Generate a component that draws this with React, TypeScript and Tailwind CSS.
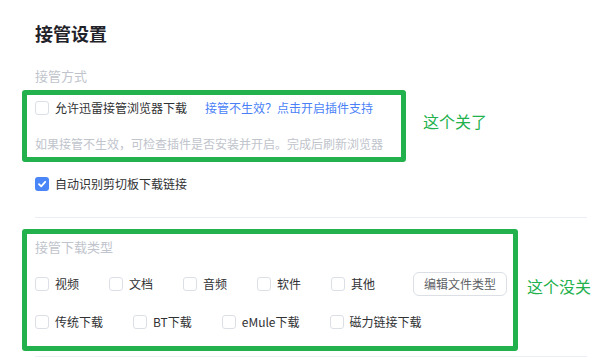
import React from "react";

const font = { fontFamily: '"Noto Sans CJK SC", "Noto Sans", sans-serif' };

function Box({ checked = false }: { checked?: boolean }) {
  if (checked) {
    return (
      <span className="flex h-[14px] w-[14px] shrink-0 items-center justify-center rounded-[3px] bg-[#4a86f7]">
        <svg width="10" height="10" viewBox="0 0 10 10">
          <path d="M2 5.2 L4.2 7.3 L8.2 2.8" fill="none" stroke="white" strokeWidth="1.8" strokeLinecap="round" strokeLinejoin="round" />
        </svg>
      </span>
    );
  }
  return <span className="h-[14px] w-[14px] shrink-0 rounded-[3px] border border-[#dcdfe6] bg-white" />;
}

function Item({ label }: { label: string }) {
  return (
    <div className="mr-[30px] flex items-center gap-[6px] text-[12px] leading-[20px] text-[#303133]">
      <Box />
      <span>{label}</span>
    </div>
  );
}

export default function App() {
  return (
    <div className="relative h-[362px] w-[606px] overflow-hidden bg-white" style={font}>
      <div className="pl-[35px] pt-[22px] text-[18px] font-bold leading-[22px] text-[#1f2329]">接管设置</div>
      <div className="mt-[23px] pl-[35px] text-[13px] leading-[18px] text-[#c0c4cc]">接管方式</div>

      <div className="mt-[5px] flex items-start">
        <div className="ml-[22px] h-[72px] w-[384px] rounded-[3px] border-[5px] border-[#22b14c] pl-[8px] pt-[3px]">
          <div className="flex items-center text-[12px] leading-[20px]">
            <Box />
            <span className="ml-[6px] text-[#303133]">允许迅雷接管浏览器下载</span>
            <span className="ml-[18px] text-[#4a7ff7]">接管不生效？点击开启插件支持</span>
          </div>
          <div className="mt-[16px] text-[12px] leading-[20px] text-[#c0c4cc]">如果接管不生效，可检查插件是否安装并开启。完成后刷新浏览器</div>
        </div>
        <div className="ml-[17px] mt-[23px] text-[16px] leading-[16px] text-[#22b14c]">这个关了</div>
      </div>

      <div className="ml-[35px] mt-[12px] flex items-center gap-[6px] text-[12px] leading-[20px] text-[#303133]">
        <Box checked />
        <span>自动识别剪切板下载链接</span>
      </div>

      <div className="ml-[35px] mt-[23px] h-px w-[552px] bg-[#ebeef5]" />

      <div className="mt-[11px] flex items-start">
        <div className="ml-[22px] h-[122px] w-[496px] rounded-[3px] border-[5px] border-[#22b14c] pl-[8px] pt-[4px]">
          <div className="text-[13px] leading-[18px] text-[#c0c4cc]">接管下载类型</div>
          <div className="mt-[16px] flex h-[24px] items-center">
            <Item label="视频" />
            <Item label="文档" />
            <Item label="音频" />
            <Item label="软件" />
            <Item label="其他" />
            <button className="ml-[8px] h-[24px] w-[94px] rounded-[6px] border border-[#dcdfe6] bg-white text-[12px] leading-[22px] text-[#606266]">编辑文件类型</button>
          </div>
          <div className="mt-[16px] flex items-center">
            <Item label="传统下载" />
            <Item label="BT下载" />
            <Item label="eMule下载" />
            <Item label="磁力链接下载" />
          </div>
        </div>
        <div className="ml-[9px] mt-[49px] text-[16px] leading-[16px] text-[#22b14c]">这个没关</div>
      </div>

      <div className="ml-[35px] mt-[5px] h-px w-[552px] bg-[#ebeef5]" />
    </div>
  );
}
